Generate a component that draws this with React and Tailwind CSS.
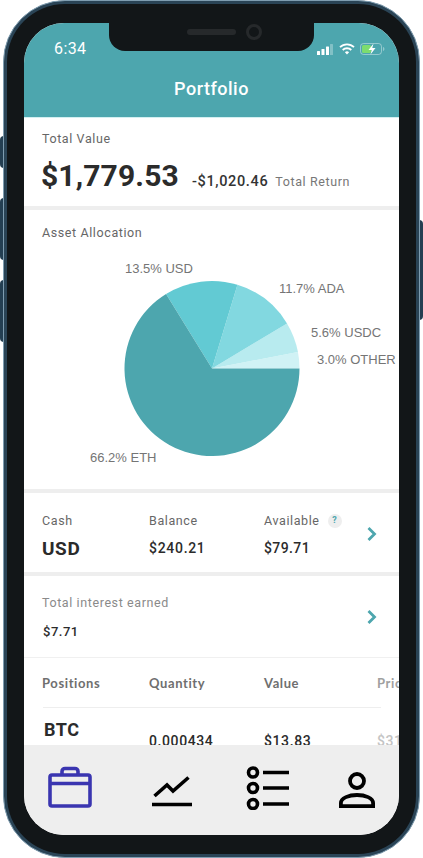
import React from "react";

const slices = [
  { pct: 3.0, color: "#d0f2f5" },
  { pct: 5.6, color: "#b8ebef" },
  { pct: 11.7, color: "#82d8e0" },
  { pct: 13.5, color: "#62cad3" },
  { pct: 66.2, color: "#4da6ae" },
];

const labels = [
  { text: "13.5% USD", x: 101, y: 63 },
  { text: "11.7% ADA", x: 255, y: 83 },
  { text: "5.6% USDC", x: 287, y: 127 },
  { text: "3.0% OTHER", x: 293, y: 154 },
  { text: "66.2% ETH", x: 66, y: 252 },
];

// Slices run counter-clockwise from 3 o'clock
function slicePaths(cx, cy, r) {
  let angle = 0;
  return slices.map((s) => {
    const next = angle + (s.pct / 100) * Math.PI * 2;
    const x1 = cx + r * Math.cos(angle);
    const y1 = cy - r * Math.sin(angle);
    const x2 = cx + r * Math.cos(next);
    const y2 = cy - r * Math.sin(next);
    const large = next - angle > Math.PI ? 1 : 0;
    angle = next;
    return { d: `M${cx} ${cy}L${x1} ${y1}A${r} ${r} 0 ${large} 0 ${x2} ${y2}Z`, color: s.color };
  });
}

function Chevron({ className = "" }) {
  return (
    <svg width="12" height="16" viewBox="0 0 12 16" fill="none" className={`shrink-0 ${className}`}>
      <path d="M2.5 2l6 6-6 6" stroke="#4da6ae" strokeWidth="2.8" />
    </svg>
  );
}

function StatusIcons() {
  return (
    <div className="flex items-center">
      <svg width="16" height="11" viewBox="0 0 16 11">
        <rect x="0" y="7" width="3" height="4" rx="0.5" fill="#fff" />
        <rect x="4.5" y="5" width="3" height="6" rx="0.5" fill="#fff" />
        <rect x="9" y="2.5" width="3" height="8.5" rx="0.5" fill="#fff" />
        <rect x="13" y="0" width="3" height="11" rx="0.5" fill="#fff" fillOpacity="0.3" />
      </svg>
      <svg width="16" height="12" viewBox="0 0 16 12" fill="none" className="ml-[6px]">
        <path d="M1 4.2a10 10 0 0 1 14 0" stroke="#fff" strokeWidth="1.8" />
        <path d="M3.7 7a6.2 6.2 0 0 1 8.6 0" stroke="#fff" strokeWidth="1.8" />
        <path d="M8 11.6L5.9 9.3a3 3 0 0 1 4.2 0z" fill="#fff" />
      </svg>
      <svg width="25" height="12" viewBox="0 0 25 12" fill="none" className="ml-[5px]">
        <rect x="0.5" y="0.5" width="21" height="11" rx="3" stroke="#fff" strokeOpacity="0.4" />
        <rect x="2" y="2" width="9" height="8" rx="1.5" fill="#7ddc6f" />
        <path d="M23 4v4c.9-.3 1.4-1 1.4-2S23.900 4.300 23 4z" fill="#fff" fillOpacity="0.4" />
        <path d="M13.500 0.500L8.500 7h3.200l-1.200 4.500L15.500 5h-3.200z" fill="#fff" />
      </svg>
    </div>
  );
}

function Header() {
  return (
    <div className="h-[95px] shrink-0 bg-[#4da6ae] border-b border-[#d3eff1] text-white font-['Roboto',sans-serif]">
      <div className="flex justify-between items-center pl-[30px] pr-[14px] pt-[14px] h-[38px]">
        <span className="text-[16px] tracking-[0.4px]">6:34</span>
        <StatusIcons />
      </div>
      <div className="text-center text-[18px] font-medium tracking-[0.5px] leading-6 mt-[16px]">Portfolio</div>
    </div>
  );
}

function Separator() {
  return <div className="h-[4px] bg-[#eeeeee] shrink-0" />;
}

function Label({ children, className = "" }) {
  return <div className={`text-[12.500px] leading-4 tracking-[0.6px] text-[#666666] ${className}`}>{children}</div>;
}

export default function App() {
  const paths = slicePaths(188, 158.5, 87.5);
  return (
    <div className="relative w-[423px] h-[858px] bg-white overflow-hidden font-['Roboto',sans-serif]">
      {/* side buttons */}
      <div className="absolute left-0 top-[136px] w-[4px] h-[32px] bg-[#243f52] rounded-l-sm" />
      <div className="absolute left-0 top-[198px] w-[4px] h-[62px] bg-[#243f52] rounded-l-sm" />
      <div className="absolute left-0 top-[280px] w-[4px] h-[62px] bg-[#243f52] rounded-l-sm" />
      <div className="absolute right-0 top-[220px] w-[4px] h-[100px] bg-[#243f52] rounded-r-sm" />

      {/* phone body */}
      <div className="relative mx-[3px] h-[858px] rounded-[62px] border border-[#7f9db0] bg-[#2a4456] p-[3px]">
        <div className="h-full rounded-[58px] bg-[#121618] pt-[19px] px-[17px]">
          <div className="w-[375px] h-[812px] bg-white rounded-[40px] overflow-hidden flex flex-col">
            <Header />

            <div className="flex-1 min-h-0 overflow-hidden">
              {/* total value */}
              <div className="h-[88px] px-[18px] pt-[13px]">
                <Label>Total Value</Label>
                <div className="flex items-baseline mt-[11px] whitespace-nowrap">
                  <span className="-ml-px text-[30px] leading-9 font-bold text-[#2b2b2b] tracking-[0.15px]">$1,779.53</span>
                  <span className="ml-[13px] text-[14.500px] font-medium text-[#333333] tracking-[0.65px]">-$1,020.46</span>
                  <span className="ml-[7px] text-[12.500px] tracking-[0.6px] text-[#777777]">Total Return</span>
                </div>
              </div>
              <Separator />

              {/* allocation */}
              <div className="relative h-[279px]">
                <Label className="absolute left-[18px] top-[15px]">Asset Allocation</Label>
                <svg width="375" height="279" viewBox="0 0 375 279" className="block">
                  {paths.map((p) => (
                    <path key={p.color} d={p.d} fill={p.color} />
                  ))}
                  {labels.map((l) => (
                    <text key={l.text} x={l.x} y={l.y} fontSize="13" fill="#757575" className="font-['Liberation_Sans',sans-serif]">
                      {l.text}
                    </text>
                  ))}
                </svg>
              </div>
              <Separator />

              {/* cash */}
              <div className="h-[79px] flex items-center pl-[18px] pr-[21px] pt-[8px]">
                <div className="flex flex-1">
                  <div className="w-[107px] shrink-0">
                    <Label>Cash</Label>
                    <div className="mt-[8px] text-[19px] leading-6 font-bold tracking-[0.6px] text-[#2b2b2b]">USD</div>
                  </div>
                  <div className="w-[115px] shrink-0">
                    <Label>Balance</Label>
                    <div className="mt-[9px] text-[14px] leading-5 font-medium tracking-[0.7px] text-[#2b2b2b]">$240.21</div>
                  </div>
                  <div>
                    <div className="flex items-center">
                      <Label>Available</Label>
                      <span className="ml-[8px] w-[14px] h-[14px] rounded-full bg-[#eeeeee] text-[#4da6ae] text-[9px] font-bold flex items-center justify-center">?</span>
                    </div>
                    <div className="mt-[9px] text-[14px] leading-5 font-medium tracking-[0.4px] text-[#2b2b2b]">$79.71</div>
                  </div>
                </div>
                <Chevron className="-mt-[6px]" />
              </div>
              <Separator />

              {/* interest */}
              <div className="h-[82px] flex items-center pl-[18px] pr-[21px] pt-[4px] border-b border-[#f0f0f0]">
                <div className="flex-1">
                  <div className="text-[12.500px] leading-4 tracking-[0.6px] text-[#8a8a8a]">Total interest earned</div>
                  <div className="ml-px mt-[11px] text-[13px] leading-5 font-medium tracking-[0.5px] text-[#2b2b2b]">$7.71</div>
                </div>
                <Chevron className="-mt-[4px]" />
              </div>

              {/* positions */}
              <div className="pl-[18px] pt-[3px] h-[49px] flex items-center text-[13px] font-bold tracking-[0.6px] text-[#6f6f6f] font-['Lato',sans-serif] whitespace-nowrap">
                <div className="w-[107px] shrink-0">Positions</div>
                <div className="w-[115px] shrink-0">Quantity</div>
                <div className="w-[113px] shrink-0">Value</div>
                <div className="shrink-0 text-[#a0a0a0]">Price</div>
              </div>
              <div className="ml-[19px] w-[338px] h-px bg-[#eeeeee]" />
              <div className="pl-[20px] flex whitespace-nowrap">
                <div className="w-[105px] shrink-0 mt-[10px] text-[18px] leading-6 font-bold tracking-[0.5px] text-[#2b2b2b]">BTC</div>
                <div className="w-[115px] shrink-0 mt-[23px] text-[14px] leading-5 font-medium tracking-[0.6px] text-[#2b2b2b]">0.000434</div>
                <div className="w-[113px] shrink-0 mt-[23px] text-[14px] leading-5 font-medium tracking-[0.6px] text-[#2b2b2b]">$13.83</div>
                <div className="shrink-0 mt-[23px] text-[14px] leading-5 font-medium tracking-[0.6px] text-[#c4c4c4]">$31,866.00</div>
              </div>
            </div>

            {/* tab bar */}
            <div className="h-[90px] shrink-0 bg-[#eeeeee] flex items-start pt-[21px] pl-[24px]">
              <svg width="44" height="42" viewBox="0 0 44 42" fill="none" stroke="#3a35b0" strokeWidth="3.6" strokeLinejoin="round" className="shrink-0">
                <rect x="2" y="9" width="40" height="31" rx="2" />
                <path d="M2 17.500h40" />
                <path d="M14 9V5.500a3 3 0 0 1 3-3h10a3 3 0 0 1 3 3V9" />
              </svg>
              <svg width="42" height="32" viewBox="0 0 42 32" fill="none" stroke="#000" strokeWidth="3.6" className="shrink-0 ml-[59px] mt-[9px]">
                <path d="M3.500 21L16 10l6 6L37.500 2.500" />
                <path d="M1 29.500h40" />
              </svg>
              <svg width="44" height="44" viewBox="0 0 44 44" fill="none" stroke="#000" strokeWidth="3.6" className="shrink-0 ml-[53px]">
                <circle cx="7" cy="6.500" r="4.500" />
                <circle cx="7" cy="22" r="4.500" />
                <circle cx="7" cy="38" r="4.500" />
                <path d="M17 6.500h26M17 22h26M17 38h26" />
              </svg>
              <svg width="36" height="36" viewBox="0 0 36 36" fill="none" stroke="#000" strokeWidth="3.8" className="shrink-0 ml-[49px] mt-[6px]">
                <circle cx="18" cy="9" r="7" />
                <path d="M1.900 34.100v-3.100c0-5 8-8 16.100-8s16.100 3 16.100 8v3.100z" />
              </svg>
            </div>
          </div>
        </div>
      </div>

      {/* notch */}
      <div className="absolute left-[109px] top-[23px] w-[205px] h-[28px] bg-[#121618] rounded-b-[16px]" />
      <div className="absolute left-[187px] top-[29px] w-[49px] h-[6px] rounded-full bg-[#26292b]" />
      <div className="absolute left-[246px] top-[24px] w-[16px] h-[16px] rounded-full border-[3px] border-[#26292b] bg-[#121618]" />
    </div>
  );
}
